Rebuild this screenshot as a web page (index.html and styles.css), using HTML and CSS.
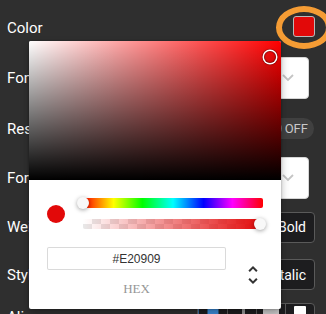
FILE: index.html
```html
<!DOCTYPE html>
<html lang="en">
  <head>
    <meta charset="UTF-8" />
    <meta name="viewport" content="width=device-width, initial-scale=1" />
    <title>Text settings - Color</title>
    <link rel="stylesheet" href="styles.css">
  </head>
  <body>
    <main class="panel">
      <div class="row row-color">
        <span class="label">Color</span>
        <div class="swatch"><span class="ring"></span></div>
      </div>
      <div class="row">
        <span class="label">Font</span>
        <div class="select">
          <svg width="12" height="8" viewBox="0 0 12 8"><polyline points="1,1 6,6 11,1" /></svg>
        </div>
      </div>
      <div class="row">
        <span class="label">Responsive</span>
        <div class="switch"><span class="knob"></span><span>OFF</span></div>
      </div>
      <div class="row">
        <span class="label">Format</span>
        <div class="select">
          <svg width="12" height="8" viewBox="0 0 12 8"><polyline points="1,1 6,6 11,1" /></svg>
        </div>
      </div>
      <div class="row">
        <span class="label">Weight</span>
        <button class="btn">Bold</button>
      </div>
      <div class="row">
        <span class="label">Style</span>
        <button class="btn">Italic</button>
      </div>
      <div class="row row-align">
        <span class="label">Align</span>
        <div class="seg">
          <span class="seg-item active">
            <svg width="16" height="16" viewBox="0 0 16 16"><rect x="2.5" y="0" width="11" height="11" fill="#3d8ddb" /></svg>
          </span>
          <span class="seg-item">
            <svg width="16" height="16" viewBox="0 0 16 16"><rect x="5.5" y="0" width="8" height="2" fill="#e6e6e6" /><rect x="8" y="2" width="3" height="10" fill="#9a9a9a" /></svg>
          </span>
          <span class="seg-item">
            <svg width="16" height="16" viewBox="0 0 16 16"><rect x="0" y="0" width="16" height="10" fill="#cfcfcf" /></svg>
          </span>
          <span class="seg-item">
            <svg width="16" height="16" viewBox="0 0 16 16"><rect x="2" y="0" width="12" height="10" rx="1" fill="#ffffff" /></svg>
          </span>
        </div>
      </div>

      <!-- color picker popover -->
      <div class="picker">
        <div class="saturation">
          <span class="sat-pointer"></span>
        </div>
        <div class="picker-body">
          <div class="controls">
            <div class="preview"><span class="preview-dot"></span></div>
            <div class="sliders">
              <div class="hue"><span class="thumb thumb-hue"></span></div>
              <div class="alpha"><span class="thumb thumb-alpha"></span></div>
            </div>
          </div>
          <div class="fields">
            <div class="field">
              <input class="hex-input" type="text" value="#E20909" />
              <div class="hex-label">hex</div>
            </div>
            <div class="toggle">
              <svg width="24" height="24" viewBox="0 0 24 24">
                <path fill="#333" d="M12,18.17L8.83,15L7.42,16.41L12,21L16.59,16.41L15.17,15M12,5.83L15.17,9L16.59,7.59L12,3L7.41,7.59L8.83,9L12,5.83Z" />
              </svg>
            </div>
          </div>
        </div>
      </div>
    </main>
  </body>
</html>
```

FILE: styles.css
```css
* {
  margin: 0;
  padding: 0;
  box-sizing: border-box;
}
body {
  background: #2f2f2f;
  color: #fff;
  font-family: Roboto, "Liberation Sans", sans-serif;
  overflow: hidden;
}

/* Settings list */
.panel {
  position: relative;
  display: grid;
  grid-template-rows: 52px 52px 49px 49px 50px 45px 48px;
}
.row {
  display: flex;
  justify-content: space-between;
  align-items: center;
  padding: 0 11px 0 7px;
}
.label {
  font-size: 15px;
  color: #fff;
}
.row-color .label {
  margin-top: 4px;
}

.swatch {
  position: relative;
  width: 22px;
  height: 21px;
  background: #e20909;
  border: 1px solid #b9b9b9;
  border-radius: 3px;
}
.ring {
  position: absolute;
  left: -18px;
  top: -11px;
  width: 56px;
  height: 43px;
  border: 6px solid #f59c34;
  border-radius: 50%;
}

.select {
  width: 120px;
  height: 42px;
  margin-right: 6px;
  background: #fff;
  border: 1px solid #d6d6d6;
  border-radius: 4px;
  display: flex;
  align-items: center;
  justify-content: flex-end;
  padding-right: 14px;
}
.select svg polyline {
  fill: none;
  stroke: #c4c4c4;
  stroke-width: 1.8;
}

.switch {
  width: 50px;
  height: 21px;
  margin-right: 1px;
  border-radius: 11px;
  background: #404040;
  color: #c9c9c9;
  font-size: 13px;
  display: flex;
  align-items: center;
  justify-content: space-between;
  padding: 0 6px 0 3px;
}
.knob {
  width: 15px;
  height: 15px;
  border-radius: 50%;
  background: #777;
}

.btn {
  height: 31px;
  padding: 0 8px;
  background: #1d1d1f;
  color: #fff;
  border: 1px solid #5a5a5a;
  border-radius: 4px;
  font-family: Roboto, "Liberation Sans", sans-serif;
  font-size: 14px;
}

.row-align {
  align-items: flex-start;
}
.row-align .label {
  margin-top: 11px;
}
.seg {
  display: flex;
  margin-top: 6px;
  height: 30px;
  border: 1px solid #5a5a5a;
  border-radius: 4px;
  background: #1d1d1f;
  overflow: hidden;
}
.seg-item {
  width: 29px;
  display: flex;
  justify-content: center;
  padding-top: 2px;
  border-left: 1px solid #5a5a5a;
}
.seg-item:first-child {
  border-left: none;
}
.seg-item.active {
  box-shadow: inset 1px 0 0 #3d6ea3;
}

/* Color picker */
.picker {
  position: absolute;
  left: 29px;
  top: 41px;
  width: 252px;
  background: #fff;
  border-radius: 2px;
  box-shadow: 0 0 2px rgba(0, 0, 0, 0.3), 0 4px 8px rgba(0, 0, 0, 0.3);
  font-family: "Liberation Sans", Arial, sans-serif;
}
.saturation {
  position: relative;
  height: 139px;
  border-radius: 2px 2px 0 0;
  background: linear-gradient(to top, #000, rgba(0, 0, 0, 0)),
    linear-gradient(to right, #fff, rgba(255, 255, 255, 0)), #f00;
}
.sat-pointer {
  position: absolute;
  left: 95.6%;
  top: 11.5%;
  width: 12px;
  height: 12px;
  border-radius: 50%;
  transform: translate(-6px, -6px);
  box-shadow: 0 0 0 1.5px #fff, inset 0 0 1px 1px rgba(0, 0, 0, 0.3),
    0 0 1px 2px rgba(0, 0, 0, 0.4);
}
.picker-body {
  padding: 18px 16px 13px;
}
.controls {
  display: flex;
  align-items: center;
  padding-right: 2px;
}
.preview {
  width: 38px;
}
.preview-dot {
  display: block;
  width: 18px;
  height: 18px;
  margin-left: 2px;
  border-radius: 50%;
  background: #e20909;
}
.sliders {
  flex: 1;
}
.hue {
  position: relative;
  height: 10px;
  margin-bottom: 11px;
  border-radius: 2px;
  background: linear-gradient(to right, #f00 0%, #ff0 17%, #0f0 33%, #0ff 50%, #00f 67%, #f0f 83%, #f00 100%);
}
.alpha {
  position: relative;
  height: 10px;
  border-radius: 2px;
  background: linear-gradient(to right, rgba(226, 9, 9, 0), #e20909),
    conic-gradient(#e8e8e8 25%, #fff 0 50%, #e8e8e8 0 75%, #fff 0) 0 0 / 18px 10px;
}
.thumb {
  position: absolute;
  top: -1px;
  width: 12px;
  height: 12px;
  border-radius: 50%;
  background: #f8f8f8;
  box-shadow: 0 1px 4px rgba(0, 0, 0, 0.37);
  transform: translateX(-6px);
}
.thumb-hue {
  left: 0;
}
.thumb-alpha {
  left: calc(100% - 3px);
}

.fields {
  display: flex;
  margin-top: 18px;
}
.field {
  flex: 1;
  padding: 0 7px 0 2px;
}
.hex-input {
  display: block;
  width: 100%;
  height: 23px;
  border: none;
  box-shadow: inset 0 0 0 1px #dadada;
  border-radius: 2px;
  font-family: "Liberation Sans", Arial, sans-serif;
  font-size: 12px;
  color: #333;
  text-align: center;
  outline: none;
}
.hex-label {
  margin-top: 11px;
  font-family: "Liberation Serif", serif;
  font-size: 13px;
  line-height: 15px;
  color: #969696;
  text-align: center;
  text-transform: uppercase;
}
.toggle {
  width: 32px;
  padding-top: 16px;
  display: flex;
  justify-content: flex-end;
}
```
